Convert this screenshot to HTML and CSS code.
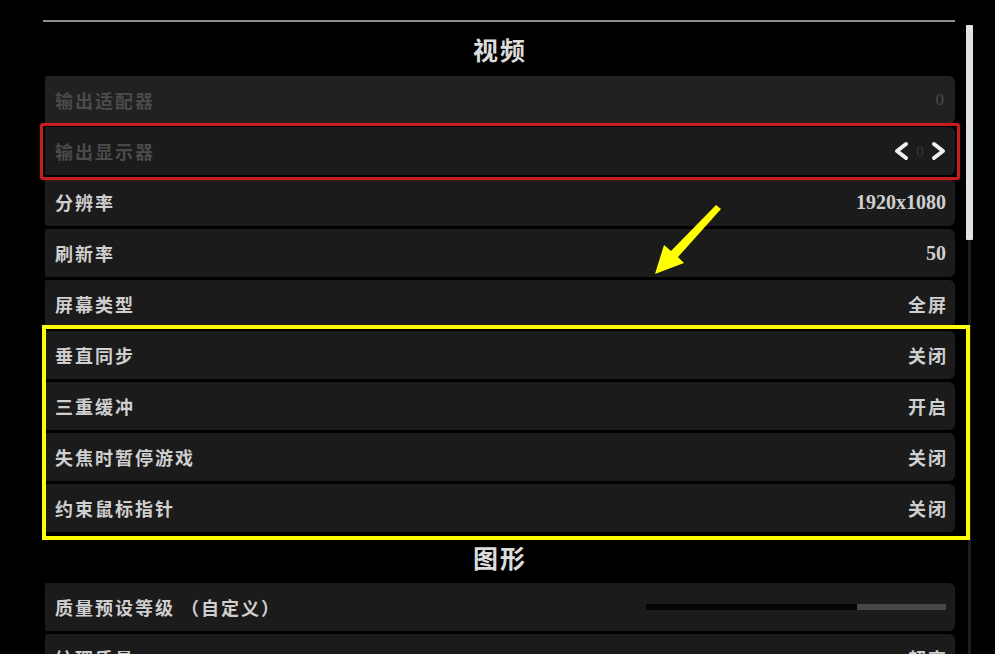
FILE: index.html
```html
<!DOCTYPE html>
<html lang="zh-CN">
<head>
    <meta charset="UTF-8">
    <title>设置 - 视频</title>
    <link rel="stylesheet" href="styles.css">
</head>
<body>

    <div class="screen">
        <div class="panel">
            <h2 class="section-title">视频</h2>

            <div class="row row-first dim">
                <span class="label">输出适配器</span>
                <span class="value">0</span>
            </div>
            <div class="row dim">
                <span class="label">输出显示器</span>
                <span class="picker">
                    <svg class="chevron" viewBox="0 0 16 20"><polyline points="13,3 4,10 13,17"/></svg>
                    <span class="picker-num">0</span>
                    <svg class="chevron" viewBox="0 0 16 20"><polyline points="3,3 12,10 3,17"/></svg>
                </span>
            </div>
            <div class="row">
                <span class="label">分辨率</span>
                <span class="value num">1920x1080</span>
            </div>
            <div class="row">
                <span class="label">刷新率</span>
                <span class="value num">50</span>
            </div>
            <div class="row">
                <span class="label">屏幕类型</span>
                <span class="value">全屏</span>
            </div>
            <div class="row">
                <span class="label">垂直同步</span>
                <span class="value">关闭</span>
            </div>
            <div class="row">
                <span class="label">三重缓冲</span>
                <span class="value">开启</span>
            </div>
            <div class="row">
                <span class="label">失焦时暂停游戏</span>
                <span class="value">关闭</span>
            </div>
            <div class="row">
                <span class="label">约束鼠标指针</span>
                <span class="value">关闭</span>
            </div>

            <h2 class="section-title section-title-small">图形</h2>

            <div class="row">
                <span class="label">质量预设等级 （自定义）</span>
                <div class="slider"><div class="slider-fill" style="width: 70.3%"></div></div>
            </div>
            <div class="row">
                <span class="label">纹理质量</span>
                <span class="value">超高</span>
            </div>
        </div>

        <div class="scrollbar">
            <div class="scroll-thumb"></div>
        </div>
    </div>

    <!-- annotations drawn over the screenshot -->
    <div class="mark mark-red"></div>
    <div class="mark mark-yellow"></div>
    <svg class="arrow" viewBox="0 0 995 654">
        <polygon points="716,205 721,209 678,257 684,263 655,274 664,245 671,251"/>
    </svg>

</body>
</html>
```

FILE: styles.css
```css
body {
    margin: 0;
    background-color: #000;
    font-family: 'Liberation Serif', 'Noto Sans CJK SC', serif;
    color: #d6d6d6;
    overflow: hidden;
}

.screen {
    display: flex;
    height: 654px;
    overflow: hidden;
}

.panel {
    margin-top: 20px;
    margin-left: 43px;
    width: 912px;
    border-top: 2px solid #8e8e8e;
}

.section-title {
    margin: 0 0 0 2px;
    height: 54px;
    display: flex;
    align-items: center;
    justify-content: center;
    font-family: 'Noto Sans CJK SC', sans-serif;
    font-size: 25px;
    font-weight: 700;
    letter-spacing: 2px;
    color: #dcdcdc;
}

.section-title-small {
    height: 44px;
    padding-bottom: 4px;
}

.row {
    display: flex;
    align-items: center;
    justify-content: space-between;
    height: 48px;
    margin: 0 0 3px 2px;
    padding: 0 9px 0 10px;
    background-color: #1b1b1b;
    border-radius: 2px 6px 6px 2px;
}

.row-first {
    background-color: #212121;
}

.label {
    font-family: 'Noto Sans CJK SC', sans-serif;
    font-size: 18px;
    font-weight: 700;
    letter-spacing: 2px;
    color: #cfcfcf;
}

.value {
    font-family: 'Noto Sans CJK SC', sans-serif;
    font-size: 18px;
    font-weight: 700;
    letter-spacing: 2px;
    margin-right: -2px;
    color: #cfcfcf;
}

.value.num {
    font-family: 'Liberation Serif', serif;
    font-size: 20px;
    letter-spacing: 0;
    margin-right: 0;
}

.dim .label,
.dim .value {
    color: #4a4a4a;
}

.dim .value {
    font-family: 'Liberation Serif', serif;
    font-size: 17px;
    font-weight: 400;
    margin-right: 0;
}

.picker {
    display: flex;
    align-items: center;
    gap: 5px;
    margin-right: -1px;
}

.chevron {
    width: 16px;
    height: 20px;
    fill: none;
    stroke: #f0f0f0;
    stroke-width: 4;
    stroke-linecap: round;
    stroke-linejoin: round;
}

.picker-num {
    font-size: 15px;
    color: #3c3c3c;
    width: 12px;
    text-align: center;
}

.slider {
    width: 300px;
    height: 6px;
    background-color: #474747;
}

.slider-fill {
    height: 100%;
    background-color: #050505;
}

.scrollbar {
    margin-left: 11px;
    margin-top: 25px;
    width: 7px;
    background: linear-gradient(to right, transparent 2px, #1e1e1e 2px, #1e1e1e 5px, transparent 5px);
}

.scroll-thumb {
    height: 215px;
    background-color: #e2e2e2;
    border-radius: 1px;
}

.mark {
    position: absolute;
    box-sizing: border-box;
}

.mark-red {
    left: 40px;
    top: 123px;
    width: 920px;
    height: 57px;
    border: 3px solid #c41f1f;
    border-radius: 3px;
    box-shadow: 0 0 2px rgba(200, 30, 30, 0.6);
}

.mark-yellow {
    left: 42px;
    top: 325px;
    width: 928px;
    height: 215px;
    border: 4px solid #ffff00;
}

.arrow {
    position: absolute;
    left: 0;
    top: 0;
    width: 995px;
    height: 654px;
    fill: #ffff00;
    pointer-events: none;
}
```
